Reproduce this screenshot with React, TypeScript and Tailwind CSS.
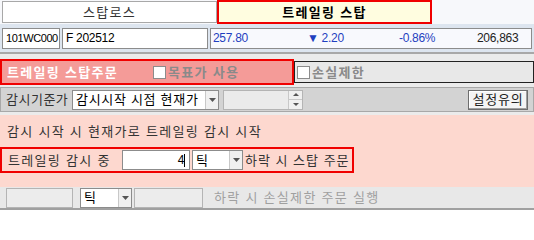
import React from "react";

// ---------------------------------------------------------------------------
// Small pieces
// ---------------------------------------------------------------------------

const NUM = "text-[12px] tracking-[-0.3px]";

function DropArrow() {
  return (
    <div className="flex h-full w-[13px] shrink-0 items-center justify-center border-l border-[#c8c8c8] bg-[#f0f0f0]">
      <svg width="7" height="4" viewBox="0 0 7 4" aria-hidden>
        <path d="M0 0h7L3.5 4z" fill="#555" />
      </svg>
    </div>
  );
}

function Select({ label, className = "" }: { label: string; className?: string }) {
  return (
    <div className={`flex h-[20px] shrink-0 items-stretch border border-[#8c8c8c] bg-white ${className}`}>
      <span className="flex min-w-0 flex-1 items-center overflow-hidden pl-[3px] text-black">{label}</span>
      <DropArrow />
    </div>
  );
}

function Checkbox() {
  return <span className="inline-block h-[13px] w-[13px] shrink-0 border border-[#8c8c8c] bg-white" />;
}

// ---------------------------------------------------------------------------
// Component
// ---------------------------------------------------------------------------

export default function App() {
  return (
    <div
      className="flex h-[210px] w-[534px] flex-col overflow-hidden whitespace-nowrap bg-[#ebebeb] text-[13px] leading-none tracking-[1.3px] text-[#222]"
      style={{ fontFamily: '"Liberation Sans", "Noto Sans CJK KR", sans-serif' }}
    >
      {/* ── Tabs ── */}
      <div className="flex h-[24px] bg-[#f7f8fb] pl-[2px]">
        <div className="my-[1px] flex w-[215px] items-center justify-center border border-[#a8a8a8] bg-white text-[#333]">
          스탑로스
        </div>
        <div className="flex w-[215px] items-center justify-center border-2 border-[#f00000] bg-[#fffde0] font-bold text-black">
          트레일링 스탑
        </div>
      </div>

      {/* ── Symbol / quote row ── */}
      <div className={`flex h-[30px] items-center gap-[2px] border-b-2 border-[#a8a8a8] bg-[#dde5ef] px-[2px] ${NUM}`}>
        <div className="flex h-[21px] w-[58px] shrink-0 items-center overflow-hidden border border-[#8c8c8c] bg-white pl-[3px] text-[11px] tracking-[-0.4px] text-black">
          101WC000
        </div>
        <div className="flex h-[21px] w-[146px] shrink-0 items-center border border-[#8c8c8c] bg-white pl-[3px] text-black">
          F 202512
        </div>
        <div className="flex h-[21px] flex-1 items-center border border-[#8c8c8c] bg-[#f8f9fd] pl-[2px] pr-[13px]">
          <span className="w-[94px] text-[#1f3fbf]">257.80</span>
          <span className="w-[92px] text-[#1f3fbf]">▼ 2.20</span>
          <span className="w-[78px] text-[#1f3fbf]">-0.86%</span>
          <span className="flex-1 text-right text-[#222]">206,863</span>
        </div>
      </div>

      {/* ── Section header ── */}
      <div className="mt-[5px] flex h-[26px] items-center">
        <div className="flex h-[26px] w-[294px] shrink-0 items-center border-2 border-[#f00000] bg-[#f49b98] pl-[5px]">
          <span className="w-[146px] font-bold text-white">트레일링 스탑주문</span>
          <span className="flex items-center gap-[2px] font-bold text-[#8a8a8a]">
            <Checkbox />
            목표가 사용
          </span>
        </div>
        <div className="flex h-[22px] flex-1 items-center gap-[2px] border border-[#222] bg-[#e8e8e8] pl-[2px] font-bold text-[#8a8a8a]">
          <Checkbox />
          손실제한
        </div>
      </div>

      {/* ── Reference price row ── */}
      <div className="mt-[2px] flex h-[25px] items-center border border-[#a8a8a8] bg-[#d3d3d3] px-[5px]">
        <span className="w-[66px] shrink-0 tracking-[0.5px] text-[#333]">감시기준가</span>
        <Select label="감시시작 시점 현재가" className="w-[147px] tracking-[0.7px]" />
        <div className="ml-[4px] flex h-[20px] w-[80px] shrink-0 items-stretch border border-[#b4b4b4] bg-[#ebebeb]">
          <span className="flex-1" />
          <div className="flex w-[14px] flex-col border-l border-[#c8c8c8] bg-[#f0f0f0]">
            <span className="flex flex-1 items-center justify-center border-b border-[#c8c8c8]">
              <svg width="6" height="3" viewBox="0 0 6 3" aria-hidden>
                <path d="M0 3h6L3 0z" fill="#555" />
              </svg>
            </span>
            <span className="flex flex-1 items-center justify-center">
              <svg width="6" height="3" viewBox="0 0 6 3" aria-hidden>
                <path d="M0 0h6L3 3z" fill="#555" />
              </svg>
            </span>
          </div>
        </div>
        <button className="ml-auto flex h-[20px] w-[60px] items-center justify-center border border-[#6e6e6e] bg-[#f4f4f4] tracking-[0.8px] text-[#222] shadow-[inset_-1px_-1px_0_#a0a0a0,inset_1px_1px_0_#fff]">
          설정유의
        </button>
      </div>

      {/* ── Trailing body ── */}
      <div className="mt-[3px] flex h-[72px] flex-col bg-[#fdd8cf]">
        <div className="flex h-[32px] items-center pl-[7px] text-[#333]">
          감시 시작 시 현재가로 트레일링 감시 시작
        </div>
        <div className="flex h-[26px] w-[354px] items-center border-2 border-[#f00000] pl-[6px] text-[#333]">
          <span className="w-[114px] shrink-0">트레일링 감시 중</span>
          <div className={`flex h-[20px] w-[68px] shrink-0 items-center justify-end border border-[#8c8c8c] bg-white pr-[4px] text-black ${NUM}`}>
            4<span className="inline-block h-[13px] w-px bg-black" />
          </div>
          <Select label="틱" className="ml-[2px] w-[51px]" />
          <span className="ml-[2px] shrink-0 tracking-[1px]">하락 시 스탑 주문</span>
        </div>
      </div>

      {/* ── Loss limit row ── */}
      <div className="flex flex-1 items-center border-b-2 border-[#a0a0a0] bg-[#e8e8e8] pl-[6px]">
        <div className="h-[20px] w-[67px] shrink-0 border border-[#b4b4b4] bg-[#ececec]" />
        <Select label="틱" className="ml-[7px] w-[52px]" />
        <div className="ml-[2px] h-[20px] w-[69px] shrink-0 border border-[#b4b4b4] bg-[#ececec]" />
        <span className="ml-[11px] text-[#a0a0a0]">하락 시 손실제한 주문 실행</span>
      </div>
    </div>
  );
}
